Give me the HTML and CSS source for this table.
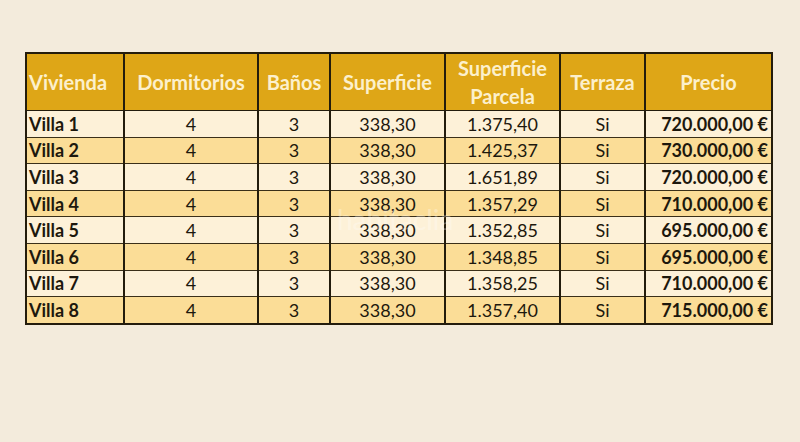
FILE: index.html
```html
<!DOCTYPE html>
<html lang="es">
<head>
<meta charset="utf-8">
<title>Villas</title>
<link rel="stylesheet" href="styles.css">
</head>
<body>
<div class="page">
  <div class="wrap">
    <table class="villas">
      <colgroup>
        <col class="c1"><col class="c2"><col class="c3"><col class="c4"><col class="c5"><col class="c6"><col class="c7">
      </colgroup>
      <thead>
        <tr>
          <th class="left">Vivienda</th>
          <th>Dormitorios</th>
          <th>Baños</th>
          <th>Superficie</th>
          <th>Superficie<br>Parcela</th>
          <th>Terraza</th>
          <th>Precio</th>
        </tr>
      </thead>
      <tbody>
        <tr class="light"><td class="name">Villa 1</td><td>4</td><td>3</td><td>338,30</td><td>1.375,40</td><td>Si</td><td class="price">720.000,00 €</td></tr>
        <tr class="dark"><td class="name">Villa 2</td><td>4</td><td>3</td><td>338,30</td><td>1.425,37</td><td>Si</td><td class="price">730.000,00 €</td></tr>
        <tr class="light"><td class="name">Villa 3</td><td>4</td><td>3</td><td>338,30</td><td>1.651,89</td><td>Si</td><td class="price">720.000,00 €</td></tr>
        <tr class="dark"><td class="name">Villa 4</td><td>4</td><td>3</td><td>338,30</td><td>1.357,29</td><td>Si</td><td class="price">710.000,00 €</td></tr>
        <tr class="light"><td class="name">Villa 5</td><td>4</td><td>3</td><td>338,30</td><td>1.352,85</td><td>Si</td><td class="price">695.000,00 €</td></tr>
        <tr class="dark"><td class="name">Villa 6</td><td>4</td><td>3</td><td>338,30</td><td>1.348,85</td><td>Si</td><td class="price">695.000,00 €</td></tr>
        <tr class="light"><td class="name">Villa 7</td><td>4</td><td>3</td><td>338,30</td><td>1.358,25</td><td>Si</td><td class="price">710.000,00 €</td></tr>
        <tr class="dark"><td class="name">Villa 8</td><td>4</td><td>3</td><td>338,30</td><td>1.357,40</td><td>Si</td><td class="price">715.000,00 €</td></tr>
      </tbody>
    </table>
    <div class="watermark">habitaclia</div>
  </div>
</div>
</body>
</html>
```
FILE: styles.css
```css
html, body {
  margin: 0;
  padding: 0;
  background: #f3ebdc;
}
.page {
  width: 800px;
  height: 442px;
  padding: 52px 0 0 25px;
  box-sizing: border-box;
  font-family: Lato, "Open Sans", "Liberation Sans", sans-serif;
  color: #1d180d;
}
.wrap {
  position: relative;
  width: 746px;
}
.villas {
  border-collapse: collapse;
  table-layout: fixed;
  width: 746px;
  border: 2px solid #231c0c;
}
.c1 { width: 98px; }
.c2 { width: 134px; }
.c3 { width: 72px; }
.c4 { width: 115px; }
.c5 { width: 115px; }
.c6 { width: 85px; }
.c7 { width: 127px; }
.villas th {
  background: #dea617;
  color: #fcf0cc;
  font-weight: 700;
  font-size: 20px;
  line-height: 28px;
  height: 56px;
  padding: 0 2px;
  text-align: center;
  border-left: 2px solid #231c0c;
  border-right: 2px solid #231c0c;
  border-bottom: 1px solid #231c0c;
  white-space: nowrap;
}
.villas th.left {
  text-align: left;
  padding-left: 2px;
}
.villas td {
  height: 25.6px;
  padding: 0 3px;
  font-size: 18px;
  line-height: 22px;
  text-align: center;
  border-left: 2px solid #231c0c;
  border-right: 2px solid #231c0c;
  border-top: 1px solid #3a2f18;
  white-space: nowrap;
}
.light td { background: #fdf1d8; }
.dark td { background: #fbdd97; }
.villas td.name {
  text-align: left;
  font-weight: 700;
  padding-left: 2px;
}
.villas td.price {
  text-align: right;
  font-weight: 700;
  padding-right: 3px;
}
.watermark {
  position: absolute;
  left: 312px;
  top: 150px;
  font-size: 28px;
  color: rgba(255, 255, 255, 0.3);
  pointer-events: none;
}
```
